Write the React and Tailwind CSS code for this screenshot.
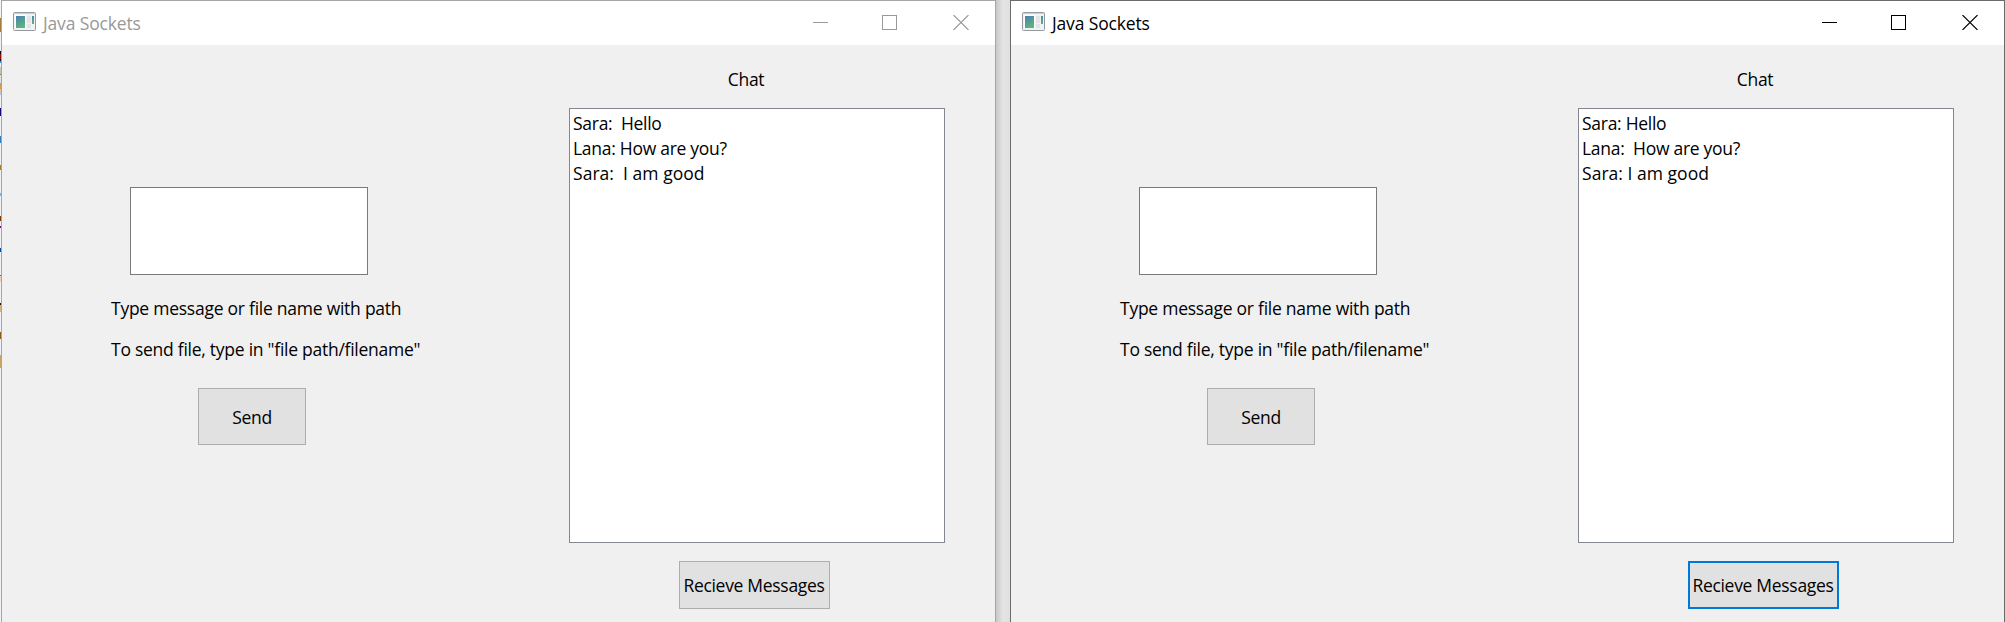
const edgeMarks = [
  [18, "bg-[#f4f4f6]"],
  [14, "bg-[#a87d3c]"],
  [19, "bg-[#f0f1f4]"],
  [3, "bg-[#1a0505]"],
  [5, "bg-[#8c0f14]"],
  [2, "bg-[#140a1e]"],
  [2, "bg-[#2f8fe8]"],
  [4, "bg-[#f0f1f4]"],
  [7, "bg-[#c4c4c4]"],
  [1, "bg-[#a07d28]"],
  [8, "bg-[#dcdfe8]"],
  [6, "bg-[#d89a48]"],
  [6, "bg-[#c4c4c4]"],
  [13, "bg-[#f0f1f4]"],
  [8, "bg-[#0a0a78]"],
  [20, "bg-[#f0f1f4]"],
  [7, "bg-[#2c7cc0]"],
  [22, "bg-[#f0f1f4]"],
  [5, "bg-[#b07820]"],
  [23, "bg-[#f0f1f4]"],
  [3, "bg-[#66b8f4]"],
  [20, "bg-[#f0f1f4]"],
  [5, "bg-[#7a3a0a]"],
  [5, "bg-[#f0f1f4]"],
  [2, "bg-[#780a78]"],
  [20, "bg-[#f0f1f4]"],
  [4, "bg-[#0a4a9c]"],
  [23, "bg-[#f0f1f4]"],
  [1, "bg-[#8c6414]"],
  [6, "bg-[#e8d4b0]"],
  [21, "bg-[#f0f1f4]"],
  [2, "bg-[#1e140a]"],
  [7, "bg-[#d8b078]"],
  [20, "bg-[#f0f1f4]"],
  [7, "bg-[#8c5a1e]"],
  [16, "bg-[#f0f1f4]"],
  [13, "bg-[#c8a468]"],
];

function AppIcon() {
  return (
    <svg width="23" height="19" viewBox="0 0 23 19" className="mt-[11px] shrink-0">
      <defs>
        <linearGradient id="pane" x1="0" y1="0" x2="0.4" y2="1">
          <stop offset="0" stopColor="#4a80b0" />
          <stop offset="1" stopColor="#5cb47c" />
        </linearGradient>
      </defs>
      <rect x="0.5" y="0.5" width="22" height="18" rx="1" fill="#f1f2f3" stroke="#959aa0" />
      <rect x="1" y="1" width="21" height="1" fill="#c8d0da" />
      <rect x="2" y="3" width="11" height="13" fill="#fff" />
      <rect x="3" y="4" width="9" height="12" fill="url(#pane)" />
      <rect x="14" y="4" width="4" height="7" fill="#e4e4e6" />
      <rect x="14" y="12" width="4" height="4" fill="#e4e4e6" />
      <rect x="19" y="4" width="2" height="8" fill="url(#pane)" />
    </svg>
  );
}

function CaptionButtons() {
  return (
    <div className="flex pt-[14px] pr-[26px]">
      <svg width="15" height="15" fill="none" stroke="currentColor">
        <path d="M0 7.5H15" />
      </svg>
      <svg width="15" height="15" fill="none" stroke="currentColor" className="ml-[54px]">
        <rect x="0.5" y="0.5" width="14" height="14" />
      </svg>
      <svg width="16" height="15" fill="none" stroke="currentColor" strokeWidth="1.1" className="ml-[56px]">
        <path d="M0.5 0L15.5 15M15.5 0L0.5 15" />
      </svg>
    </div>
  );
}

function ChatWindow({ active, messages }) {
  return (
    <section
      className={`flex h-[640px] w-[995px] shrink-0 flex-col border bg-[#f0f0f0] text-black ${
        active ? "border-[#6b6b6b]" : "border-[#a6a6a6]"
      }`}
    >
      <header
        className={`flex h-11 shrink-0 items-start justify-between bg-white pl-[11px] ${
          active ? "text-black" : "text-[#999999]"
        }`}
      >
        <div className="flex items-start gap-[7px]">
          <AppIcon />
          <h1 className="mt-[10px] leading-6 tracking-[-0.15px]">Java Sockets</h1>
        </div>
        <CaptionButtons />
      </header>
      <div className="flex">
        <div className="flex w-[567px] flex-col pt-[142px]">
          <input aria-label="Message" className="ml-[128px] h-[88px] w-[238px] border border-[#7a7a7a] bg-white px-2 outline-none" />
          <p className="mt-[21px] ml-[109px] h-6 leading-6 whitespace-nowrap tracking-[-0.25px]">
            Type message or file name with path
          </p>
          <p className="mt-[17px] ml-[109px] h-6 leading-6 whitespace-nowrap tracking-[-0.26px]">
            To send file, type in "file path/filename"
          </p>
          <button className="mt-[27px] ml-[196px] h-[57px] w-[108px] border border-[#adadad] bg-[#e1e1e1] pt-px tracking-[-0.3px]">
            Send
          </button>
        </div>
        <div className="flex w-[376px] flex-col items-center">
          <h2 className="mt-[22px] -ml-[22px] h-6 leading-6 tracking-[-0.3px]">Chat</h2>
          <div className="mt-[17px] h-[435px] w-full border border-[#828790] bg-white pt-[2px] pl-[3px] leading-[25px] whitespace-pre">
            {messages.map((m) => (
              <div key={m} className={m.endsWith("good") ? "tracking-[0.03px]" : "tracking-[-0.28px]"}>
                {m}
              </div>
            ))}
          </div>
          <button
            className={`mt-[18px] -ml-[6px] h-12 w-[151px] bg-[#e1e1e1] whitespace-nowrap tracking-[-0.3px] ${
              active ? "border-2 border-[#0078d7]" : "border border-[#adadad]"
            }`}
          >
            Recieve Messages
          </button>
        </div>
      </div>
    </section>
  );
}

export default function App() {
  return (
    <main className="flex h-[622px] w-[2005px] overflow-hidden bg-[#f0f0f0] font-['Open_Sans','Noto_Sans',sans-serif] text-[17.5px]">
      <div className="flex w-px flex-col bg-[#f0f1f4]">
        {edgeMarks.map(([height, color], i) => (
          <div key={i} className={`shrink-0 ${color}`} style={{ height }} />
        ))}
      </div>
      <ChatWindow active={false} messages={["Sara:  Hello", "Lana: How are you?", "Sara:  I am good"]} />
      <div className="w-[14px] shrink-0 bg-linear-to-r from-[#c8c8c8] via-[#e4e4e4] to-[#e0e0e0]" />
      <ChatWindow active messages={["Sara: Hello", "Lana:  How are you?", "Sara: I am good"]} />
    </main>
  );
}
